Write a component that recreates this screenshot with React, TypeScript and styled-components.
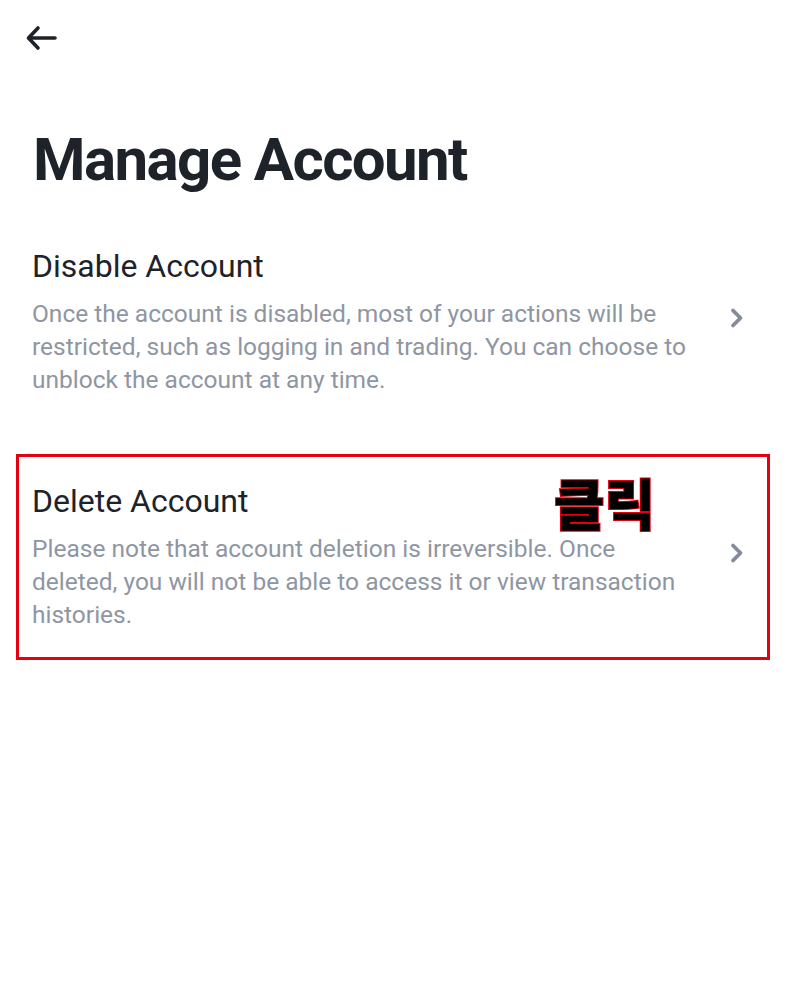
import React from "react";
import styled, { createGlobalStyle } from "styled-components";

const Global = createGlobalStyle`
  html, body { margin: 0; padding: 0; background: #ffffff; }
  body { font-family: Roboto, "Noto Sans", "Liberation Sans", sans-serif; }
`;

const Page = styled.div`
  width: 800px;
  min-height: 1002px;
  background: #fff;
  box-sizing: border-box;
  padding: 22px 0 0 0;
`;

const BackButton = styled.button`
  display: flex;
  align-items: center;
  justify-content: center;
  width: 40px;
  height: 32px;
  margin-left: 21px;
  padding: 0;
  border: none;
  background: none;
`;

const Title = styled.h1`
  margin: 66px 0 0 33px;
  font-size: 60px;
  line-height: 80px;
  font-weight: 700;
  letter-spacing: -1.6px;
  color: #1e2329;
`;

const List = styled.div`
  display: flex;
  flex-direction: column;
  gap: 29px;
  margin-top: 19px;
`;

const Highlight = styled.div<{ $on?: boolean }>`
  position: relative;
  margin: 0 30px 0 16px;
  border: 3px solid ${(p) => (p.$on ? "#e3000f" : "transparent")};
  padding: 24px 0 26px 13px;
`;

const Item = styled.div`
  display: flex;
  align-items: center;
  gap: 20px;
`;

const TextCol = styled.div`
  flex: 1;
  display: flex;
  flex-direction: column;
`;

const ItemTitle = styled.div`
  font-size: 32px;
  line-height: 40px;
  color: #1e2329;
  font-weight: 400;
  margin-bottom: 11px;
`;

const ItemDesc = styled.div`
  font-size: 24.5px;
  line-height: 33px;
  color: #8f96a3;
  max-width: 665px;
`;

const Chevron = styled.div`
  width: 24px;
  display: flex;
  justify-content: center;
  margin-right: 18px;
  margin-bottom: 6px;
`;

const Annotation = styled.span`
  position: absolute;
  left: 535px;
  top: 12px;
  font-family: "Noto Sans CJK KR", sans-serif;
  font-weight: 900;
  font-size: 55px;
  line-height: 64px;
  color: #000;
  -webkit-text-stroke: 2px #e3000f;
  paint-order: stroke fill;
`;

const ArrowLeft = () => (
  <svg width="32" height="26" viewBox="0 0 32 26" fill="none">
    <path d="M30 13H4" stroke="#1e2329" strokeWidth="3.6" strokeLinecap="round" />
    <path d="M13 3L3.5 13L13 23" stroke="#1e2329" strokeWidth="3.6" strokeLinecap="round" strokeLinejoin="round" />
  </svg>
);

const ChevronIcon = () => (
  <svg width="16" height="22" viewBox="0 0 16 22" fill="none">
    <path d="M4 3.5L11.5 11L4 18.5" stroke="#858c99" strokeWidth="3.8" strokeLinecap="round" strokeLinejoin="round" />
  </svg>
);

const items = [
  {
    title: "Disable Account",
    desc: "Once the account is disabled, most of your actions will be restricted, such as logging in and trading. You can choose to unblock the account at any time.",
    highlight: false,
  },
  {
    title: "Delete Account",
    desc: "Please note that account deletion is irreversible. Once deleted, you will not be able to access it or view transaction histories.",
    highlight: true,
  },
];

export default function App() {
  return (
    <>
      <Global />
      <Page>
        <BackButton aria-label="back">
          <ArrowLeft />
        </BackButton>
        <Title>Manage Account</Title>
        <List>
          {items.map((it) => (
            <Highlight key={it.title} $on={it.highlight}>
              <Item>
                <TextCol>
                  <ItemTitle>{it.title}</ItemTitle>
                  <ItemDesc>{it.desc}</ItemDesc>
                </TextCol>
                <Chevron>
                  <ChevronIcon />
                </Chevron>
              </Item>
              {it.highlight && <Annotation>클릭</Annotation>}
            </Highlight>
          ))}
        </List>
      </Page>
    </>
  );
}
